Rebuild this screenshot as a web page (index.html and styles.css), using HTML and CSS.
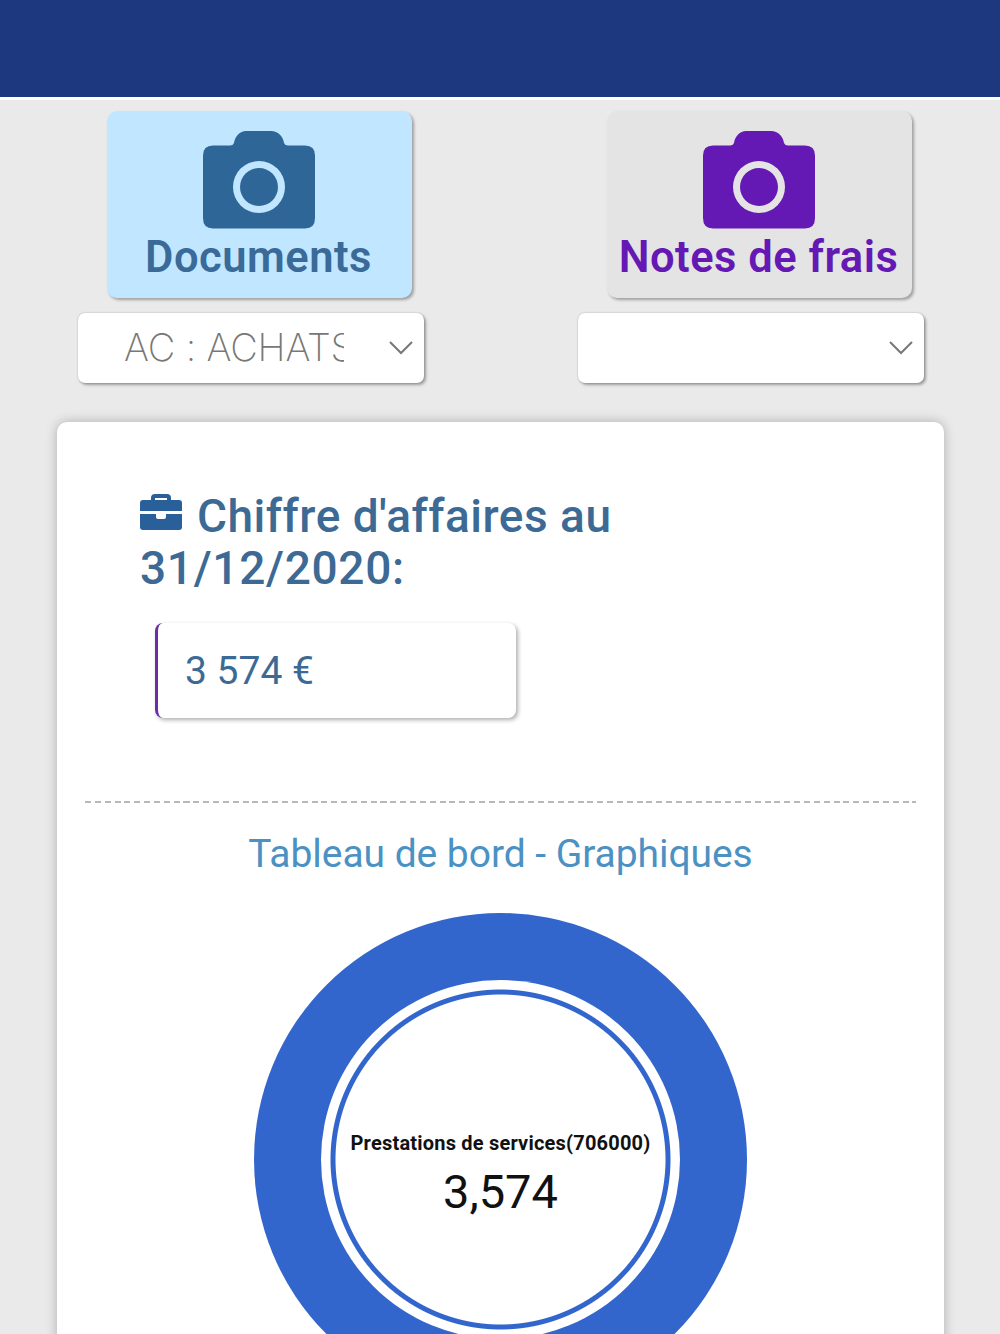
FILE: index.html
```html
<!DOCTYPE html>
<html lang="fr">
<head>
<meta charset="utf-8">
<title>Tableau de bord</title>
<link rel="stylesheet" href="styles.css">
</head>
<body>
<svg class="symbols" aria-hidden="true">
  <symbol id="camera" viewBox="0 0 112 98">
    <path fill-rule="evenodd" d="M10 14.500H27Q30 14.500 31 12C32 5 37 0 43 0H68C75 0 80 5 81 12Q82 14.500 85 14.500H102Q112 14.500 112 24.500V87Q112 97.500 102 97.500H10Q0 97.500 0 87V24.500Q0 14.500 10 14.500ZM56 30A26 26 0 1 0 56 82A26 26 0 1 0 56 30ZM56 37A19 19 0 1 1 56 75A19 19 0 1 1 56 37Z"/>
  </symbol>
</svg>
<header class="topbar"></header>
<main>
  <section class="actions">
    <div class="action">
      <button class="tile documents"><svg class="camera"><use href="#camera"/></svg><span>Documents</span></button>
      <div class="select"><span class="value">AC : ACHATS</span><svg class="chevron" viewBox="0 0 26 15"><path d="M2 2L13 13L24 2"/></svg></div>
    </div>
    <div class="action">
      <button class="tile expenses"><svg class="camera"><use href="#camera"/></svg><span>Notes de frais</span></button>
      <div class="select"><span class="value"></span><svg class="chevron" viewBox="0 0 26 15"><path d="M2 2L13 13L24 2"/></svg></div>
    </div>
  </section>
  <section class="card">
    <h1><svg class="briefcase" viewBox="0 0 42 36"><path fill-rule="evenodd" d="M3 6H11V4Q11 0 15 0H27Q31 0 31 4V6H39Q42 6 42 9V17H0V9Q0 6 3 6ZM15 4V6H27V4ZM0 20H16V23Q16 25 18 25H24Q26 25 26 23V20H42V33Q42 36 39 36H3Q0 36 0 33Z"/></svg><span>Chiffre d'affaires au</span><br><span class="date">31/12/2020:</span></h1>
    <div class="amount">3 574 €</div>
    <hr>
    <h2>Tableau de bord - Graphiques</h2>
    <div class="donut"><div class="hole">
      <span class="label">Prestations de services(706000)</span>
      <span class="total">3,574</span>
    </div></div>
  </section>
</main>
</body>
</html>
```
FILE: styles.css
```css
* { box-sizing: border-box; }
html, body { height: 100%; }
body {
  display: flex;
  flex-direction: column;
  margin: 0;
  overflow: hidden;
  background: #eaeaea;
  font-family: Roboto, "Liberation Sans", sans-serif;
  color: #3c6a95;
}
main { flex: 1; min-height: 0; overflow: hidden; }
.symbols { display: none; }
.topbar { flex: none; height: 100px; background: #1e3880; border-bottom: 3px solid #fff; }
.actions { display: grid; grid-template-columns: 500px 500px; padding-top: 11px; height: 322px; }
.action { display: flex; flex-direction: column; gap: 15px; padding-left: 78px; }
.tile {
  display: flex;
  flex-direction: column;
  align-items: center;
  width: 305px;
  height: 187px;
  margin-left: 29px;
  padding: 20px 2px 0 0;
  border: 0;
  border-radius: 10px;
  font: 600 43.500px/50px Roboto, sans-serif;
  letter-spacing: .5px;
  white-space: nowrap;
  box-shadow: 2px 2px 3px rgba(0, 0, 0, .32);
}
.documents { background: #c1e6ff; color: #3a6a98; }
.expenses { background: #e4e4e4; color: #6418b4; }
.camera { width: 112px; height: 98px; margin-bottom: 4px; flex: none; fill: currentColor; }
.documents .camera { fill: #2f6698; }
.select {
  display: flex;
  align-items: center;
  justify-content: space-between;
  width: 346px;
  height: 70px;
  padding: 0 10px 0 46px;
  background: #fff;
  border-radius: 7px;
  box-shadow: 2px 2px 3px rgba(0, 0, 0, .32), 0 0 2px rgba(0, 0, 0, .25);
}
.value {
  width: 220px;
  overflow: hidden;
  white-space: nowrap;
  font: 200 38px/50px Inter, sans-serif;
  letter-spacing: -.2px;
  margin-top: -2px;
  color: #777;
}
.chevron { width: 26px; height: 15px; margin-top: -2px; fill: none; stroke: #777; stroke-width: 2; }
.card {
  width: 887px;
  height: 100%;
  margin-left: 57px;
  padding: 69px 28px 0;
  background: #fff;
  border-radius: 10px;
  box-shadow: 0 0 12px rgba(0, 0, 0, .26);
}
h1 { margin: 0 0 0 55px; font-size: 46px; line-height: 51.500px; font-weight: 500; letter-spacing: .5px; white-space: nowrap; }
.briefcase { width: 42px; height: 36px; margin-right: 15px; position: relative; top: -2px; fill: #2a6099; }
.date { letter-spacing: .7px; }
.amount {
  width: 361px;
  height: 95px;
  margin: 29px 0 0 70px;
  padding-left: 27px;
  border-left: 3px solid #6b2ea8;
  border-radius: 8px;
  font-size: 39px;
  line-height: 96px;
  box-shadow: 2px 2px 4px rgba(0, 0, 0, .32);
}
hr { height: 2px; margin: 83px 0 0; border: 0; background: repeating-linear-gradient(90deg, #b8b8b8 0 6px, transparent 6px 9.850px); }
h2 { margin: 26px 0 0; font-size: 39px; line-height: 50px; font-weight: 400; letter-spacing: -.05px; text-align: center; white-space: nowrap; color: #4b91c3; }
.donut {
  width: 493px;
  height: 493px;
  margin: 34px auto 0;
  padding: 67px;
  border-radius: 50%;
  background: #3366cc;
}
.hole {
  display: flex;
  flex-direction: column;
  align-items: center;
  width: 359px;
  height: 359px;
  padding-top: 148px;
  border-radius: 50%;
  background: radial-gradient(circle, #fff 164.500px, #3366cc 165.500px 169.500px, #fff 170.500px);
  white-space: nowrap;
}
.label { font-size: 20px; line-height: 30px; font-weight: 700; letter-spacing: .2px; color: #111; }
.total { margin-top: 6px; font-size: 47px; line-height: 56px; color: #111; }
```
